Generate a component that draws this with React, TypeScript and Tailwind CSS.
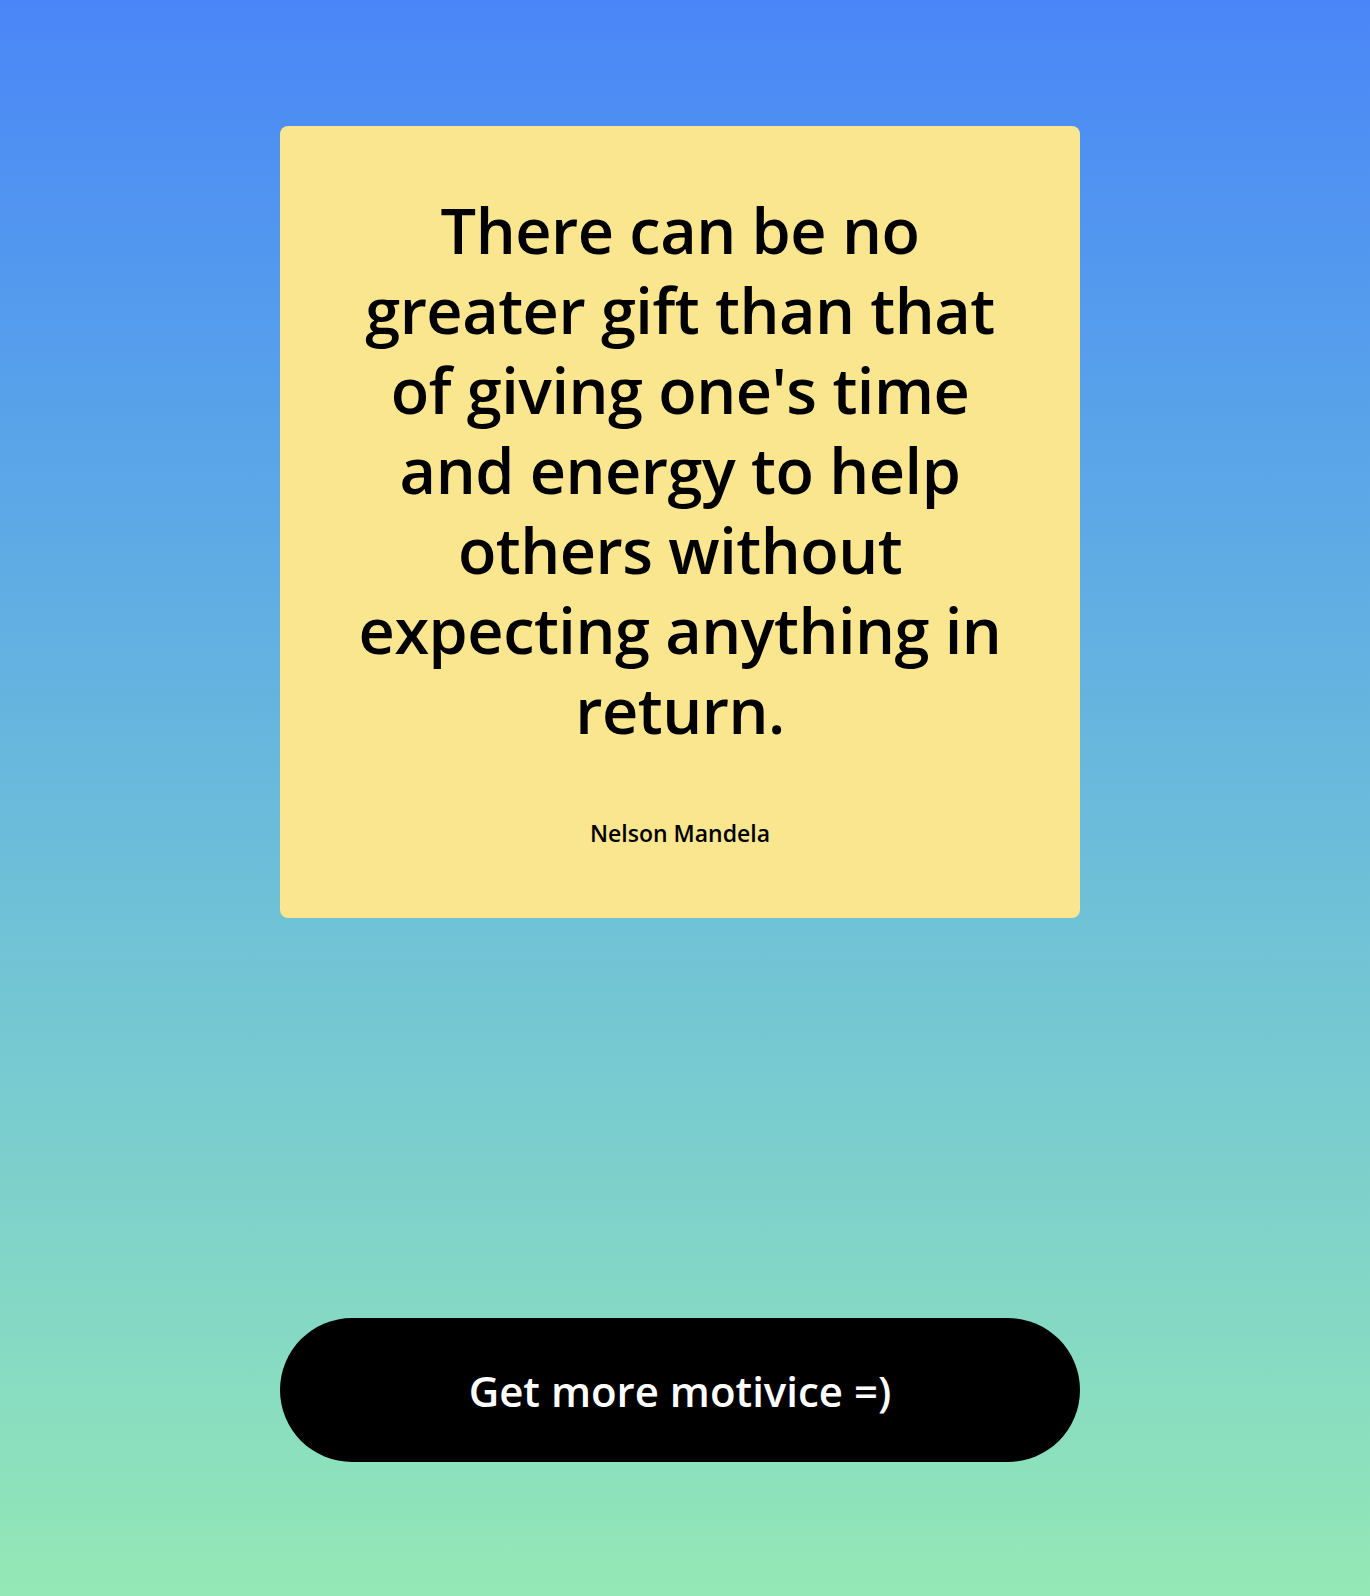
const quote = {
  text: "There can be no greater gift than that of giving one's time and energy to help others without expecting anything in return.",
  author: "Nelson Mandela",
};

function QuoteCard({ text, author }: { text: string; author: string }) {
  return (
    <div className="w-[800px] h-[792px] bg-[#f9e68e] rounded-lg px-[66px] pt-[64px] flex flex-col items-center text-black">
      <p className="text-[63px] leading-[80px] font-semibold text-center tracking-[-0.5px]">
        {text}
      </p>
      <div className="mt-[66px] text-[23px] font-semibold">{author}</div>
    </div>
  );
}

export default function App() {
  return (
    <div
      className="min-h-[1596px] w-full bg-gradient-to-b from-[#4a86f7] to-[#94e8b5] flex flex-col items-center pt-[126px] pb-[134px] pr-[10px]"
      style={{ fontFamily: '"Open Sans", "Noto Sans", sans-serif' }}
    >
      <QuoteCard text={quote.text} author={quote.author} />
      <button className="mt-[400px] w-[800px] h-[144px] rounded-full bg-black text-white text-[42px] font-semibold">
        Get more motivice =)
      </button>
    </div>
  );
}
